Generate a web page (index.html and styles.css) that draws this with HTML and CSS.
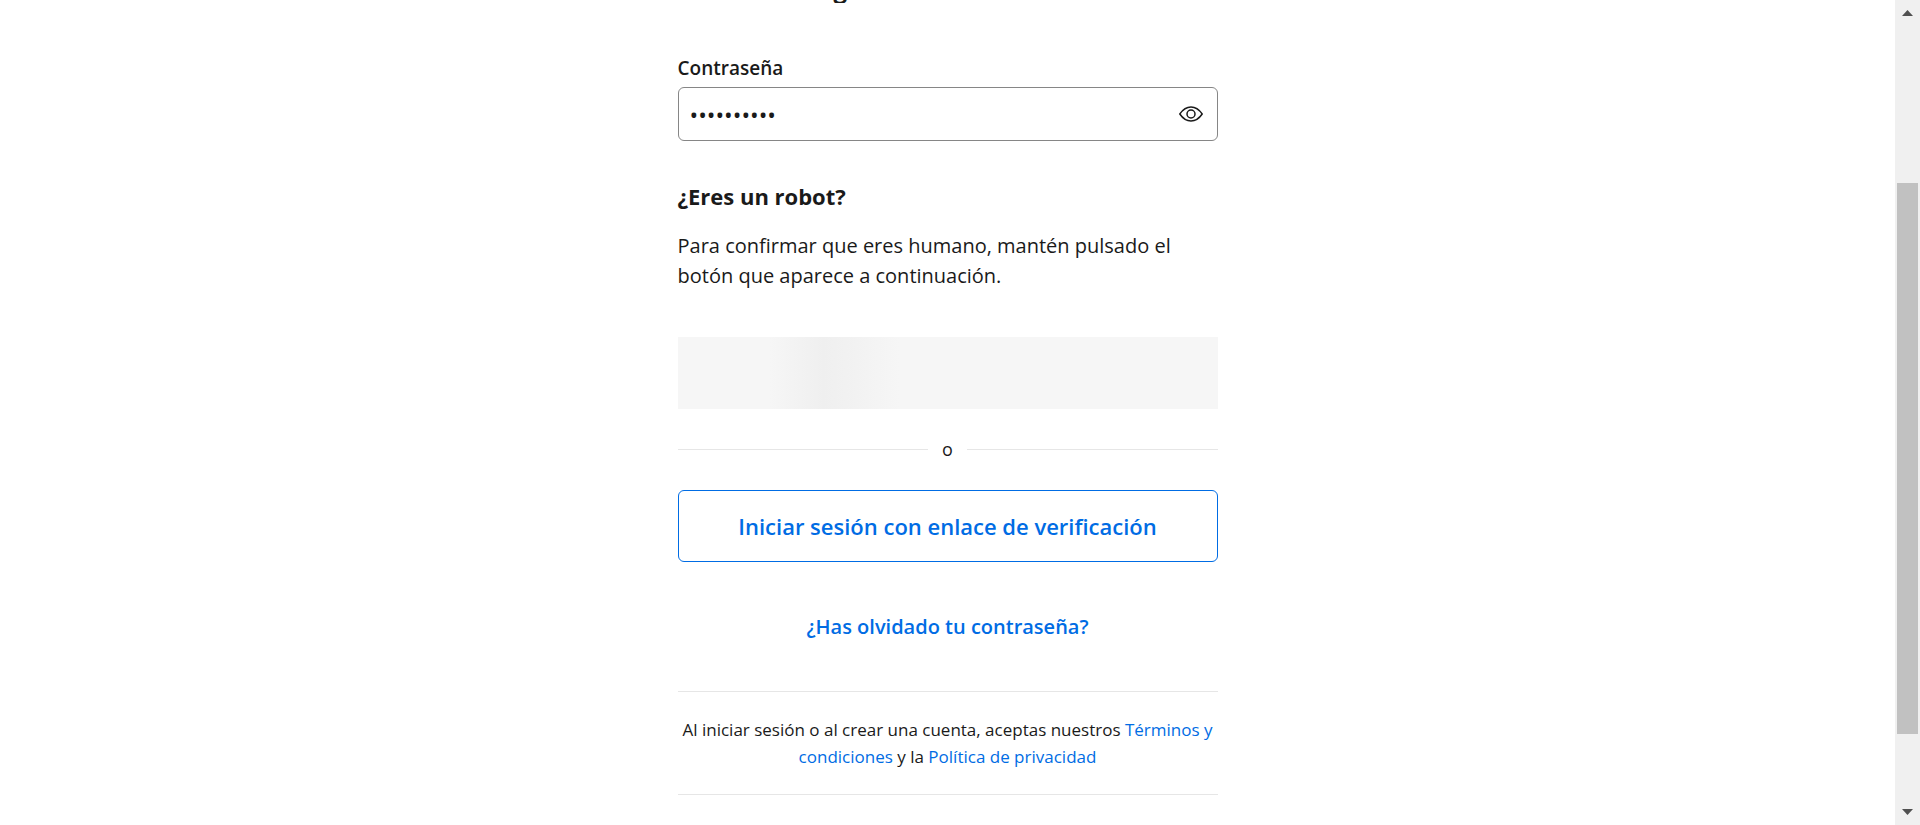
FILE: index.html
```html
<!DOCTYPE html>
<html lang="es">
<head>
<meta charset="utf-8">
<title>Iniciar sesión</title>
<link rel="stylesheet" href="styles.css">
</head>
<body class="page">
<main class="content">
  <div class="column">
    <div class="title"><span>g</span></div>
    <form class="form">
      <label class="label" for="password">Contraseña</label>
      <div class="field">
        <input class="field-input" id="password" type="password" value="contrasena">
        <button class="field-toggle" type="button" aria-label="Mostrar contraseña">
          <svg width="24" height="16" viewBox="0 0 24 16" fill="none" stroke="#1a1a1a" stroke-width="1.5" stroke-linejoin="round">
            <path d="M0.8 8C4 3.300 7.800 1 12 1s8 2.300 11.200 7C20 12.700 16.200 15 12 15S4 12.700 0.800 8Z"/>
            <circle cx="12" cy="8" r="4"/>
          </svg>
        </button>
      </div>
      <h2 class="heading">¿Eres un robot?</h2>
      <p class="text">Para confirmar que eres humano, mantén pulsado el botón que aparece a continuación.</p>
      <div class="skeleton"></div>
      <div class="divider"><span>o</span></div>
      <button class="link-button" type="button">Iniciar sesión con enlace de verificación</button>
      <a class="forgot" href="#">¿Has olvidado tu contraseña?</a>
    </form>
    <p class="legal">Al iniciar sesión o al crear una cuenta, aceptas nuestros <a href="#">Términos y condiciones</a> y la <a href="#">Política de privacidad</a></p>
  </div>
</main>
<div class="scrollbar" aria-hidden="true">
  <svg width="11" height="6" viewBox="0 0 11 6"><path d="M5.500 0L11 6H0Z" fill="#505050"/></svg>
  <div class="track"><div class="thumb"></div></div>
  <svg width="11" height="6" viewBox="0 0 11 6"><path d="M0 0H11L5.500 6Z" fill="#505050"/></svg>
</div>
</body>
</html>
```
FILE: styles.css
```css
* { box-sizing: border-box; }

.page {
  display: flex;
  height: 100vh;
  margin: 0;
  overflow: hidden;
  background: #fff;
  color: #1a1a1a;
  font-family: "Open Sans", "Noto Sans", sans-serif;
}

.content {
  flex: 1;
  display: flex;
  justify-content: center;
  overflow: hidden;
}

.column {
  width: 100%;
  max-width: 540px;
}

.title {
  display: flex;
  align-items: flex-end;
  height: 3px;
  padding-left: 156px;
  overflow: hidden;
  font-size: 24px;
  font-weight: 700;
  line-height: 28px;
}

.form {
  display: flex;
  flex-direction: column;
  padding-top: 50px;
}

.label {
  margin-bottom: 4px;
  font-size: 19px;
  font-weight: 600;
  line-height: 30px;
}

.field {
  display: flex;
  align-items: center;
  height: 54px;
  padding: 0 14px 0 11px;
  border: 1px solid #868686;
  border-radius: 6px;
}

.field-input {
  flex: 1;
  min-width: 0;
  padding: 2px 0 0;
  border: 0;
  outline: 0;
  background: none;
  color: #1a1a1a;
  font: 400 23px/30px "Open Sans", sans-serif;
}

.field-toggle {
  display: flex;
  padding: 0;
  border: 0;
  background: none;
}

.heading {
  margin: 39px 0 19px;
  font-size: 22px;
  font-weight: 700;
  line-height: 32px;
}

.text {
  margin: 0 0 46px;
  font-size: 20px;
  line-height: 30px;
}

.skeleton {
  height: 72px;
  background: linear-gradient(90deg, #f6f6f6 17%, #efefef 27%, #f6f6f6 41%);
}

.divider {
  display: flex;
  align-items: center;
  gap: 14px;
  margin: 27px 0;
  font-size: 18px;
  line-height: 27px;
}

.divider::before,
.divider::after {
  flex: 1;
  height: 1px;
  background: #e6e6e6;
  content: "";
}

.link-button {
  height: 72px;
  border: 1px solid #006ce4;
  border-radius: 6px;
  background: #fff;
  color: #006ce4;
  font: 600 22px/32px "Open Sans", sans-serif;
}

.forgot {
  align-self: center;
  margin: 50px 0 49px;
  color: #006ce4;
  font-size: 20px;
  font-weight: 600;
  line-height: 30px;
  text-decoration: none;
}

.legal {
  margin: 0;
  padding: 24px 0;
  border: solid #e6e6e6;
  border-width: 1px 0;
  font-size: 17px;
  line-height: 27px;
  text-align: center;
}

.legal a {
  color: #006ce4;
  text-decoration: none;
}

.scrollbar {
  display: flex;
  flex-direction: column;
  align-items: center;
  width: 25px;
  padding: 10px 2px;
  background: #f0f0f0;
}

.track {
  flex: 1;
  width: 21px;
  padding-top: 167px;
}

.thumb {
  height: 88%;
  background: #c1c1c1;
}
```
